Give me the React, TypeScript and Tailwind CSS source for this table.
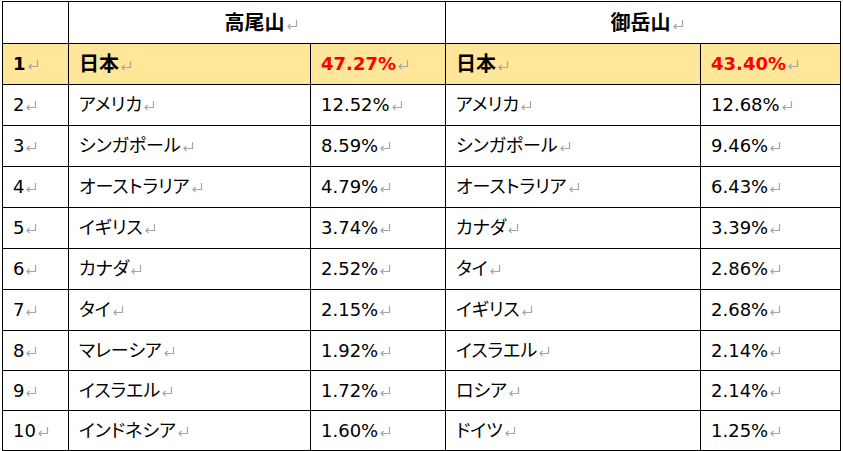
import React from 'react';

interface Row {
  rank: number;
  takaoCountry: string;
  takaoShare: string;
  mitakeCountry: string;
  mitakeShare: string;
}

const rows: Row[] = [
  { rank: 1, takaoCountry: '日本', takaoShare: '47.27%', mitakeCountry: '日本', mitakeShare: '43.40%' },
  { rank: 2, takaoCountry: 'アメリカ', takaoShare: '12.52%', mitakeCountry: 'アメリカ', mitakeShare: '12.68%' },
  { rank: 3, takaoCountry: 'シンガポール', takaoShare: '8.59%', mitakeCountry: 'シンガポール', mitakeShare: '9.46%' },
  { rank: 4, takaoCountry: 'オーストラリア', takaoShare: '4.79%', mitakeCountry: 'オーストラリア', mitakeShare: '6.43%' },
  { rank: 5, takaoCountry: 'イギリス', takaoShare: '3.74%', mitakeCountry: 'カナダ', mitakeShare: '3.39%' },
  { rank: 6, takaoCountry: 'カナダ', takaoShare: '2.52%', mitakeCountry: 'タイ', mitakeShare: '2.86%' },
  { rank: 7, takaoCountry: 'タイ', takaoShare: '2.15%', mitakeCountry: 'イギリス', mitakeShare: '2.68%' },
  { rank: 8, takaoCountry: 'マレーシア', takaoShare: '1.92%', mitakeCountry: 'イスラエル', mitakeShare: '2.14%' },
  { rank: 9, takaoCountry: 'イスラエル', takaoShare: '1.72%', mitakeCountry: 'ロシア', mitakeShare: '2.14%' },
  { rank: 10, takaoCountry: 'インドネシア', takaoShare: '1.60%', mitakeCountry: 'ドイツ', mitakeShare: '1.25%' },
];

// paragraph mark (Word's formatting mark), drawn so it matches the grey hook arrow
const Mark = () => (
  <svg viewBox="0 0 12 11" className="inline-block w-[12px] h-[11px] ml-[1px] align-baseline" fill="none" stroke="#a6a6a6" strokeWidth="1.2">
    <path d="M10.5 1v6.5H2" />
    <path d="M4.5 5L2 7.5 4.5 10" />
  </svg>
);

const Cell = ({ children, className = '' }: { children: React.ReactNode; className?: string }) => (
  <td className={`border border-black px-[10px] align-middle whitespace-nowrap ${className}`}>
    {children}
    <Mark />
  </td>
);

export default function App() {
  return (
    <div className="bg-white w-[843px] h-[451px] pl-[2px] pt-[1px] font-['DejaVu_Sans','Noto_Sans_CJK_JP',sans-serif] [font-feature-settings:'palt'] text-[18px] leading-none text-black">
      <table className="table-fixed border-collapse w-[839px]">
        <colgroup>
          <col className="w-[66px]" />
          <col className="w-[242px]" />
          <col className="w-[135px]" />
          <col className="w-[255px]" />
          <col className="w-[140px]" />
        </colgroup>
        <thead>
          <tr className="h-[42px]">
            <th className="border border-black" />
            <th colSpan={2} className="border border-black text-center font-bold text-[20px] pl-[8px]">
              高尾山<Mark />
            </th>
            <th colSpan={2} className="border border-black text-center font-bold text-[20px] pl-[8px]">
              御岳山<Mark />
            </th>
          </tr>
        </thead>
        <tbody>
          {rows.map((r) => {
            const top = r.rank === 1;
            return (
              <tr key={r.rank} className={`${r.rank <= 7 ? 'h-[41px]' : 'h-[40px]'} ${top ? 'bg-[#ffe699] font-bold' : ''}`}>
                <Cell>{r.rank}</Cell>
                <Cell className={top ? 'text-[20px]' : ''}>{r.takaoCountry}</Cell>
                <Cell className={top ? 'text-[#ff0000]' : ''}>{r.takaoShare}</Cell>
                <Cell className={top ? 'text-[20px]' : ''}>{r.mitakeCountry}</Cell>
                <Cell className={top ? 'text-[#ff0000]' : ''}>{r.mitakeShare}</Cell>
              </tr>
            );
          })}
        </tbody>
      </table>
    </div>
  );
}
